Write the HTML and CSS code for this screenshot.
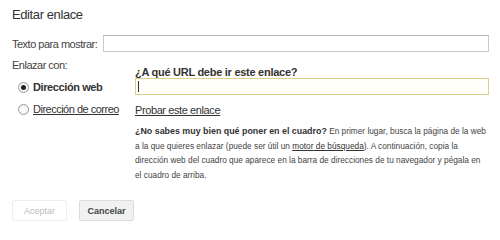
FILE: index.html
```html
<!DOCTYPE html>
<html lang="es">
<head>
<meta charset="utf-8">
<title>Editar enlace</title>
<link rel="stylesheet" href="styles.css">
</head>
<body>
<div class="dialog">
  <div class="title">Editar enlace</div>
  <div class="text-row">
    <label class="label">Texto para mostrar:</label>
    <div class="field"></div>
  </div>
  <div class="link-section">
    <div class="left">
      <div class="label">Enlazar con:</div>
      <div class="radio-row"><span class="radio checked"></span><span class="opt-bold">Dirección web</span></div>
      <div class="radio-row"><span class="radio"></span><span class="opt-link">Dirección de correo</span></div>
    </div>
    <div class="right">
      <div class="question">¿A qué URL debe ir este enlace?</div>
      <div class="field url"><span class="caret"></span></div>
      <div class="test"><span class="ulink">Probar este enlace</span></div>
      <p class="help"><b>¿No sabes muy bien qué poner en el cuadro?</b> En primer lugar, busca la página de la web a la que quieres enlazar (puede ser útil un <span class="ulink">motor de búsqueda</span>). A continuación, copia la dirección web del cuadro que aparece en la barra de direcciones de tu navegador y pégala en el cuadro de arriba.</p>
    </div>
  </div>
  <div class="buttons">
    <div class="btn disabled">Aceptar</div>
    <div class="btn">Cancelar</div>
  </div>
</div>
</body>
</html>
```
FILE: styles.css
```css
html, body {
  margin: 0;
  padding: 0;
  background: #fff;
}
.dialog {
  width: 500px;
  height: 234px;
  box-sizing: border-box;
  padding: 7px 11px 0 12px;
  font-family: "Liberation Sans", Arial, sans-serif;
  color: #333;
}
.title {
  font-size: 13px;
  line-height: 15px;
  color: #333;
  letter-spacing: -0.4px;
}
.text-row {
  display: flex;
  align-items: center;
  margin-top: 13px;
}
.label {
  font-size: 11px;
  letter-spacing: -0.5px;
  color: #444;
}
.text-row .label {
  width: 91px;
}
.field {
  flex: 1;
  height: 15px;
  border: 1px solid #c8c8c8;
  border-top-color: #b8b8b8;
  background: #fff;
}
.link-section {
  display: flex;
  margin-top: 6px;
}
.left {
  width: 123px;
  display: flex;
  flex-direction: column;
}
.left .label {
  line-height: 14px;
}
.radio-row {
  display: flex;
  align-items: center;
  margin-left: 6px;
  height: 14px;
  margin-top: 8px;
}
.radio-row + .radio-row {
  margin-top: 8px;
}
.radio {
  width: 9px;
  height: 9px;
  border: 1px solid #9a9a9a;
  border-radius: 50%;
  background: radial-gradient(circle, #fff 0, #eee 100%);
  box-sizing: content-box;
  margin-right: 4px;
  position: relative;
}
.radio.checked::after {
  content: "";
  position: absolute;
  left: 2px;
  top: 2px;
  width: 5px;
  height: 5px;
  border-radius: 50%;
  background: #222;
}
.opt-bold {
  font-weight: bold;
  font-size: 11px;
  letter-spacing: -0.4px;
  color: #333;
}
.opt-link {
  font-size: 11px;
  letter-spacing: -0.5px;
  text-decoration: underline;
  color: #333;
}
.right {
  flex: 1;
  display: flex;
  flex-direction: column;
  padding-top: 7px;
}
.question {
  font-weight: bold;
  font-size: 11px;
  line-height: 12px;
  letter-spacing: -0.27px;
  margin-top: 1px;
  color: #333;
}
.field.url {
  flex: none;
  height: 15px;
  margin-top: 0;
  border-color: #ddd08a;
  background: #fffef8;
  position: relative;
}
.caret {
  position: absolute;
  left: 2px;
  top: 2px;
  width: 1px;
  height: 11px;
  background: #333;
}
.test {
  margin-top: 8px;
  font-size: 11px;
  letter-spacing: -0.4px;
  line-height: 14px;
}
.ulink {
  text-decoration: underline;
  color: #333;
}
.help {
  margin: 7px 0 0 0;
  max-width: 354px;
  font-size: 8.3px;
  line-height: 14.5px;
  color: #444;
}
.help b {
  font-size: 8.9px;
  color: #333;
}
.buttons {
  display: flex;
  gap: 12px;
  margin-top: 18px;
}
.btn {
  width: 55px;
  height: 21px;
  box-sizing: border-box;
  display: flex;
  align-items: center;
  justify-content: center;
  font-size: 9px;
  font-weight: bold;
  border: 1px solid #dcdcdc;
  background: #f1f1f1;
  color: #444;
  border-radius: 2px;
}
.btn.disabled {
  background: #fff;
  border-color: #eee;
  color: #bbb;
  font-weight: normal;
}
```
